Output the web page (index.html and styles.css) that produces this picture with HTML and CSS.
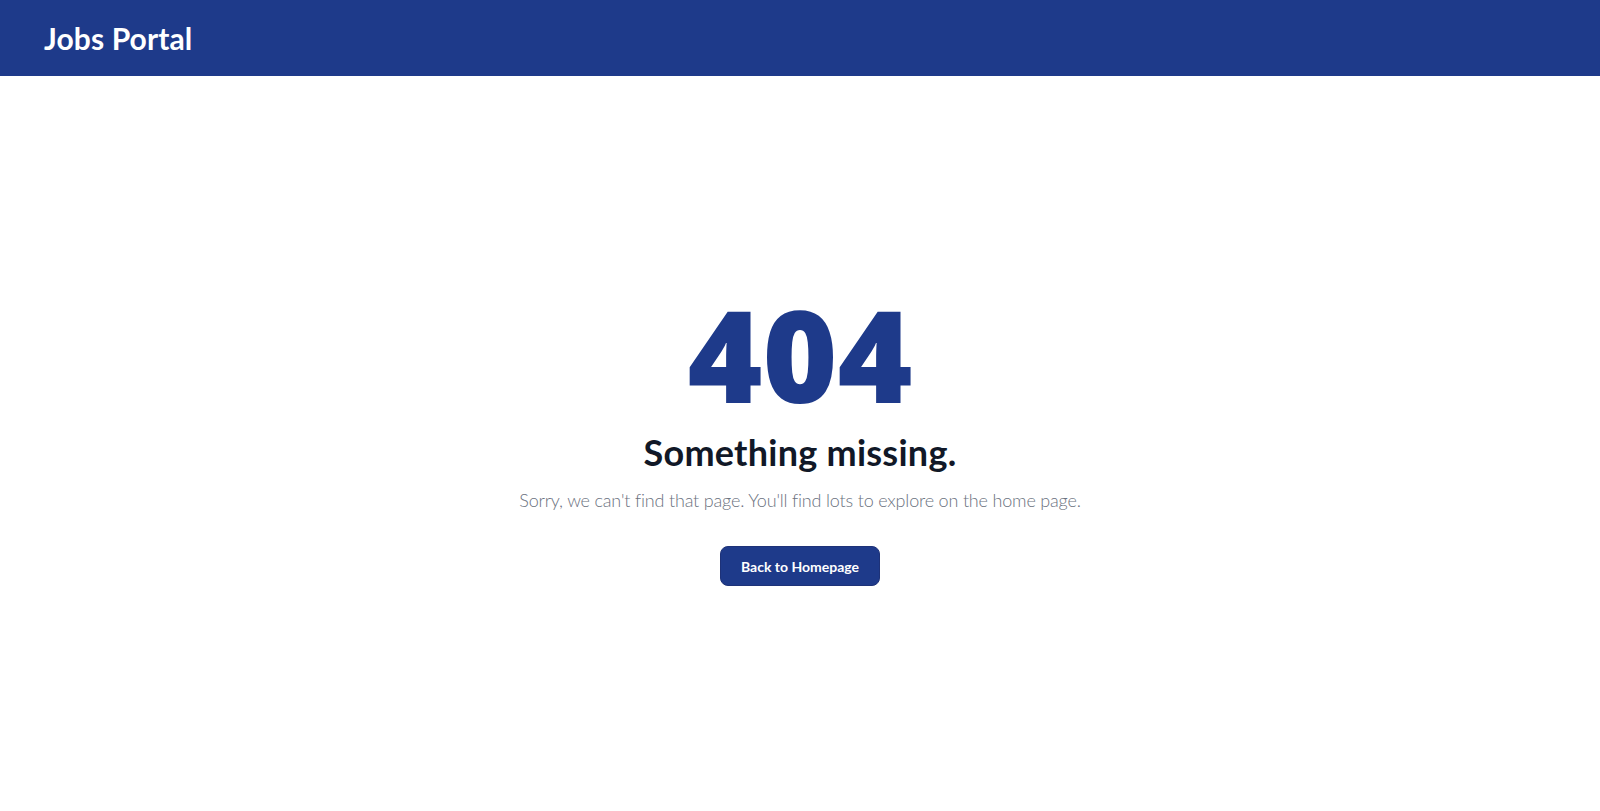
FILE: index.html
```html
<!DOCTYPE html>
<html lang="en">
<head>
<meta charset="utf-8">
<title>Jobs Portal - 404</title>
<link rel="stylesheet" href="styles.css">
</head>
<body>
<header class="navbar">
  <div class="brand">Jobs Portal</div>
</header>
<main class="page">
  <section class="notfound">
    <h1 class="code">404</h1>
    <p class="title">Something missing.</p>
    <p class="message">Sorry, we can't find that page. You'll find lots to explore on the home page.</p>
    <a class="btn" href="#">Back to Homepage</a>
  </section>
</main>
</body>
</html>
```
FILE: styles.css
```css
html, body {
  margin: 0;
  padding: 0;
  background: #ffffff;
  font-family: Lato, "Open Sans", "Noto Sans", sans-serif;
}
.navbar {
  height: 76px;
  background: #1e3a8a;
  display: flex;
  align-items: center;
  padding-left: 44px;
  box-sizing: border-box;
}
.brand {
  color: #ffffff;
  font-size: 30px;
  font-weight: 700;
  line-height: 1;
  letter-spacing: 0.1px;
}
.page {
  padding-top: 214px;
  display: flex;
  justify-content: center;
}
.notfound {
  text-align: center;
  display: flex;
  flex-direction: column;
  align-items: center;
}
.code {
  margin: 0 0 14px;
  font-family: "Open Sans", Lato, sans-serif;
  font-size: 128px;
  font-weight: 800;
  line-height: 128px;
  color: #1e3a8a;
  letter-spacing: 0;
}
.title {
  margin: 0 0 14px;
  font-size: 36px;
  font-weight: 700;
  line-height: 40px;
  color: #111827;
  letter-spacing: 0.25px;
}
.message {
  margin: 0 0 32px;
  font-size: 18px;
  font-weight: 300;
  line-height: 28px;
  color: #6b7280;
  letter-spacing: -0.18px;
}
.btn {
  display: inline-flex;
  align-items: center;
  justify-content: center;
  width: 160px;
  height: 40px;
  box-sizing: border-box;
  border-radius: 8px;
  background: #1e3a8a;
  border: 1px solid #1e3278;
  color: #ffffff;
  font-size: 14px;
  font-weight: 700;
  text-decoration: none;
}
```
